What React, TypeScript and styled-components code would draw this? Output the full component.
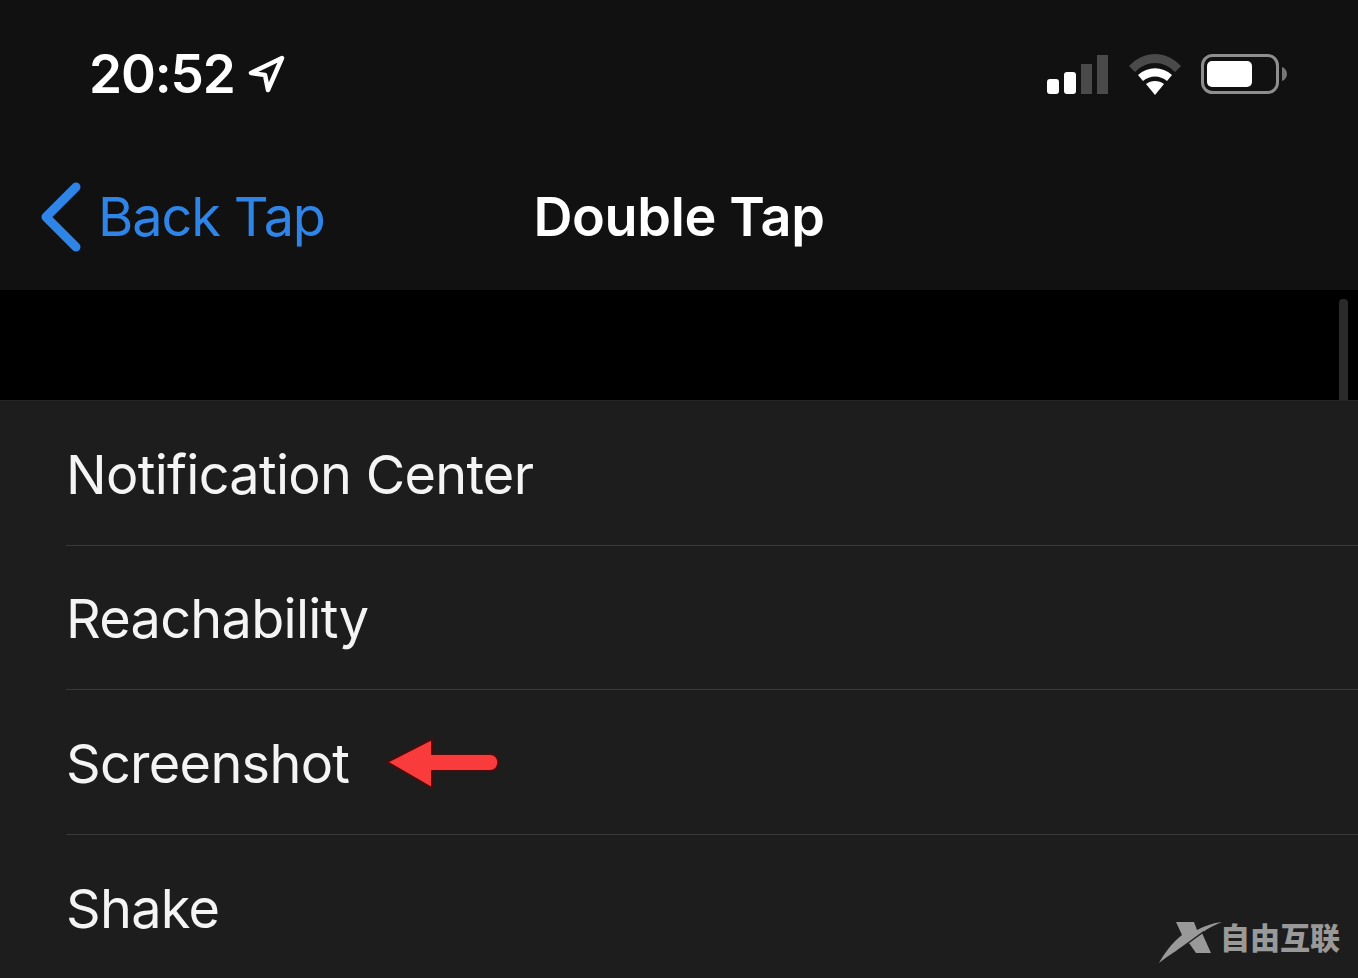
import styled, { createGlobalStyle } from 'styled-components'

const GlobalStyle = createGlobalStyle`
	html, body {
		margin: 0;
		padding: 0;
		background: #000;
	}
	* {
		box-sizing: border-box;
	}
`

const Screen = styled.div`
	position: relative;
	width: 1358px;
	height: 978px;
	overflow: hidden;
	background: #000;
	font-family: Inter, 'Liberation Sans', sans-serif;
	-webkit-font-smoothing: antialiased;
`

const Header = styled.header`
	height: 290px;
	background: #111;
	display: flex;
	flex-direction: column;
`

const StatusBar = styled.div`
	height: 148px;
	padding: 0 71px 0 89px;
	display: flex;
	align-items: center;
	justify-content: space-between;
`

const TimeGroup = styled.div`
	display: flex;
	align-items: center;
	gap: 13px;
`

const Time = styled.span`
	font-size: 53px;
	font-weight: 600;
	letter-spacing: -1.1px;
	line-height: 1;
	color: #fff;
`

const StatusIcons = styled.div`
	display: flex;
	align-items: center;
	gap: 20px;
`

const Nav = styled.nav`
	height: 142px;
	padding: 30px 40px 0;
	display: grid;
	grid-template-columns: 1fr auto 1fr;
	align-items: start;
`

const BackLink = styled.a`
	display: flex;
	align-items: center;
	gap: 14px;
	height: 78px;
	color: #2f84e8;
	font-size: 54px;
	letter-spacing: -1.1px;
	line-height: 1;
`

const Title = styled.h1`
	margin: 0;
	height: 78px;
	display: flex;
	align-items: center;
	color: #fff;
	font-size: 54px;
	font-weight: 600;
	letter-spacing: -0.35px;
	line-height: 1;
`

const Gap = styled.div`
	height: 110px;
	background: #000;
`

const List = styled.ul`
	margin: 0;
	padding: 0 0 0 66px;
	list-style: none;
	background: #1d1d1d;
	height: 578px;
	border-top: 1px solid #262626;
`

const Row = styled.li`
	height: 144.5px;
	padding-top: 4px;
	display: flex;
	align-items: center;
	gap: 36px;
	color: #f4f4f5;
	font-size: 54px;
	letter-spacing: -0.7px;
	line-height: 1;
	border-bottom: 1px solid #3a3a3a;

	&:last-child {
		border-bottom: none;
	}
`

const Scrollbar = styled.div`
	position: absolute;
	top: 299px;
	right: 10px;
	width: 9px;
	height: 101px;
	border-radius: 4px 4px 0 0;
	background: #2a2a2a;
`

const Watermark = styled.div`
	position: absolute;
	right: 18px;
	bottom: 14px;
	display: flex;
	align-items: flex-start;
	color: #999;
`

const WatermarkText = styled.span`
	margin: -2px 0 0 -3px;
	font-family: 'Noto Sans CJK SC', sans-serif;
	font-size: 30px;
	font-weight: 900;
	line-height: 1.1;
`

function LocationIcon() {
	return (
		<svg width="38" height="38" viewBox="0 0 38 38" fill="none">
			<path
				d="M34 3 3 18l14 2 3 15z"
				stroke="#fff"
				strokeWidth="4.5"
				strokeLinejoin="round"
			/>
		</svg>
	)
}

function SignalIcon() {
	return (
		<svg width="62" height="40" viewBox="0 0 62 40">
			<rect x="0" y="25" width="12" height="15" rx="3" fill="#fff" />
			<rect x="17" y="18" width="12" height="22" rx="3" fill="#fff" />
			<rect x="34" y="10" width="11" height="30" fill="#4a4a4a" />
			<rect x="50" y="1" width="11" height="39" fill="#4a4a4a" />
		</svg>
	)
}

function WifiIcon() {
	return (
		<svg width="52" height="42" viewBox="0 0 52 42">
			<path d="M0 13C15-3 37-3 52 13l-6 6C34 7 18 7 6 19z" fill="#4a4a4a" />
			<path d="M9 22c10-9 24-9 34 0l-5 6c-7-6-17-6-24 0z" fill="#fff" />
			<path d="M17 31c5-4 13-4 18 0l-9 11z" fill="#fff" />
		</svg>
	)
}

function BatteryIcon() {
	return (
		<svg width="86" height="42" viewBox="0 0 86 42">
			<rect x="1.5" y="2.5" width="75" height="37" rx="10" fill="none" stroke="#8e8e8e" strokeWidth="3" />
			<rect x="6" y="8" width="45" height="26" rx="5" fill="#fff" />
			<path d="M81 14c3 1 5 4 5 7s-2 6-5 7z" fill="#777" />
		</svg>
	)
}

function BackChevron() {
	return (
		<svg width="44" height="72" viewBox="0 0 44 72" fill="none">
			<path
				d="M36 6 6 36l30 30"
				stroke="#2f84e8"
				strokeWidth="9"
				strokeLinecap="round"
				strokeLinejoin="round"
			/>
		</svg>
	)
}

function RedArrow() {
	return (
		<svg width="116" height="52" viewBox="0 0 116 52">
			<path
				d="M2 24 47 1v15h58c11 0 11 17 0 17H47v17z"
				fill="#f93b3b"
				stroke="#4a0d0d"
				strokeWidth="2"
				strokeLinejoin="round"
			/>
		</svg>
	)
}

function WatermarkLogo() {
	return (
		<svg width="64" height="42" viewBox="0 0 64 42">
			<path
				d="M17 0H35L38 8C45 4 54 1 63 0 56 3 49 6 43 11L52 31H37L30 21C20 27 10 33 0 41 6 30 14 20 23 13z"
				fill="#999"
			/>
			<path d="M45 9.5 18 29" fill="none" stroke="#1d1d1d" strokeWidth="1.5" />
		</svg>
	)
}

const rows = ['Notification Center', 'Reachability', 'Screenshot', 'Shake']

export default function App() {
	return (
		<Screen>
			<GlobalStyle />
			<Header>
				<StatusBar>
					<TimeGroup>
						<Time>20:52</Time>
						<LocationIcon />
					</TimeGroup>
					<StatusIcons>
						<SignalIcon />
						<WifiIcon />
						<BatteryIcon />
					</StatusIcons>
				</StatusBar>
				<Nav>
					<BackLink>
						<BackChevron />
						Back Tap
					</BackLink>
					<Title>Double Tap</Title>
				</Nav>
			</Header>
			<Gap />
			<List>
				{rows.map((row) => (
					<Row key={row}>
						{row}
						{row === 'Screenshot' && <RedArrow />}
					</Row>
				))}
			</List>
			<Scrollbar />
			<Watermark>
				<WatermarkLogo />
				<WatermarkText>自由互联</WatermarkText>
			</Watermark>
		</Screen>
	)
}
